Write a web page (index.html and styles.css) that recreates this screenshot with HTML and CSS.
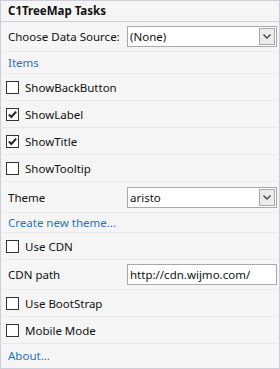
FILE: index.html
```html
<!DOCTYPE html>
<html>
<head>
<meta charset="utf-8">
<link rel="stylesheet" href="styles.css">
</head>
<body>
<div class="panel">
  <div class="header">C1TreeMap Tasks</div>
  <div class="row row-field">
    <span class="label">Choose Data Source:</span>
    <div class="select"><span class="select-text">(None)</span><span class="drop"><svg width="8" height="5" viewBox="0 0 8 5"><path d="M0.5 0.5 L4 4 L7.5 0.5" fill="none" stroke="#444" stroke-width="1.4"/></svg></span></div>
  </div>
  <div class="row row-link"><a class="link">Items</a></div>
  <div class="row row-check"><span class="box"></span><span>ShowBackButton</span></div>
  <div class="row row-check"><span class="box checked"><svg width="11" height="11" viewBox="0 0 11 11"><path d="M1.8 5.4 L4.3 8 L9.2 2.6" fill="none" stroke="#1e1e1e" stroke-width="1.9"/></svg></span><span>ShowLabel</span></div>
  <div class="row row-check"><span class="box checked"><svg width="11" height="11" viewBox="0 0 11 11"><path d="M1.8 5.4 L4.3 8 L9.2 2.6" fill="none" stroke="#1e1e1e" stroke-width="1.9"/></svg></span><span>ShowTitle</span></div>
  <div class="row row-check"><span class="box"></span><span>ShowTooltip</span></div>
  <div class="row row-theme">
    <span class="label">Theme</span>
    <div class="select"><span class="select-text">aristo</span><span class="drop"><svg width="8" height="5" viewBox="0 0 8 5"><path d="M0.5 0.5 L4 4 L7.5 0.5" fill="none" stroke="#444" stroke-width="1.4"/></svg></span></div>
  </div>
  <div class="row row-link2"><a class="link">Create new theme...</a></div>
  <div class="row row-check"><span class="box"></span><span>Use CDN</span></div>
  <div class="row row-field">
    <span class="label">CDN path</span>
    <div class="input">http://cdn.wijmo.com/</div>
  </div>
  <div class="row row-check"><span class="box"></span><span>Use BootStrap</span></div>
  <div class="row row-check"><span class="box"></span><span>Mobile Mode</span></div>
  <div class="row row-last"><a class="link">About...</a></div>
</div>
</body>
</html>
```

FILE: styles.css
```css
html, body {
  margin: 0;
  padding: 0;
  background: #f5f5f5;
}
.panel {
  width: 280px;
  height: 369px;
  box-sizing: border-box;
  border: 1px solid #cccedb;
  background: #f5f5f5;
  font-family: "Noto Sans", "Open Sans", sans-serif;
  font-size: 11.5px;
  color: #111;
  overflow: hidden;
}
.header {
  height: 20px;
  line-height: 20px;
  padding-left: 7px;
  font-weight: bold;
  border-bottom: 1px solid #cccedb;
}
.row {
  display: flex;
  align-items: center;
  margin: 0 2px;
  padding-left: 5px;
  border-bottom: 1px solid #e8e8e8;
  box-sizing: border-box;
}
.row-field { height: 30px; }
.row-theme { height: 31px; }
.row-link { height: 22px; }
.row-link2 { height: 20px; }
.row-check { height: 27px; }
.row-last { height: 23px; border-bottom: none; }
.label { width: 119px; flex: none; }
.link { color: #1e73c4; text-decoration: none; }
.box {
  width: 13px;
  height: 13px;
  box-sizing: border-box;
  border: 1px solid #333337;
  background: #fff;
  margin-left: -2px;
  margin-right: 6px;
  display: flex;
  align-items: center;
  justify-content: center;
  flex: none;
}
.select, .input {
  width: 150px;
  height: 21px;
  box-sizing: border-box;
  border: 1px solid #a9a9a9;
  background: #fff;
  display: flex;
  align-items: center;
  padding-left: 2px;
}
.select-text { flex: 1; }
.drop {
  width: 16px;
  height: 17px;
  box-sizing: border-box;
  border: 1px solid #a9a9a9;
  background: #ececec;
  margin-right: 1px;
  display: flex;
  align-items: center;
  justify-content: center;
}
```
